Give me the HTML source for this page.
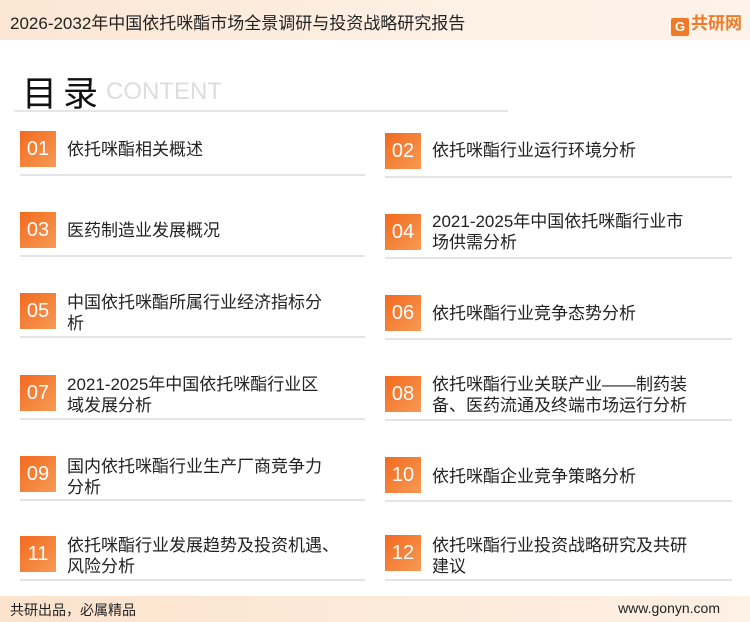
<!DOCTYPE html>
<html><head><meta charset="utf-8"><style>
*{margin:0;padding:0;box-sizing:border-box}
body{width:750px;height:622px;position:relative;background:#fff;font-family:"Liberation Sans","Noto Sans CJK SC",sans-serif;overflow:hidden;color:#222}
.hdr{position:absolute;left:0;top:0;width:750px;height:40px;background:linear-gradient(90deg,#fbe6d3,#fdf0e4 60%,#fdf3ea)}
.hdr .t{position:absolute;left:10px;top:9px;font-size:17px;color:#222}
.logo{position:absolute;right:8px;top:9px;font-size:17px;font-weight:bold;color:#f07a26}
.logo span{display:inline-block;width:18px;height:18px;background:#f07a26;color:#fff;font-size:13px;text-align:center;line-height:18px;border-radius:2px;margin-right:2px;vertical-align:-2px}
.ttl{position:absolute;left:22px;top:66px;font-size:35px;color:#111;letter-spacing:6px}
.en{position:absolute;left:106px;top:78px;font-size:24px;color:#ddd}
.hl{position:absolute;left:14px;top:110px;width:494px;height:2px;background:#e6e6e6}
.box{position:absolute;width:36px;height:36px;background:linear-gradient(135deg,#f26a1e,#f79a55);color:#fff;font-size:20px;text-align:center;line-height:36px}
.tx{position:absolute;font-size:17px;line-height:21px;color:#222}
.ln{position:absolute;height:2px;background:#e3e3e8}
.ftr{position:absolute;left:0;top:596px;width:750px;height:26px;background:linear-gradient(90deg,#fbe3cd,#fdf0e4)}
.ftr .a{position:absolute;left:10px;top:4px;font-size:14px}
.ftr .b{position:absolute;right:30px;top:4px;font-size:14px}
</style></head><body>
<div class="hdr"><div class="t">2026-2032年中国依托咪酯市场全景调研与投资战略研究报告</div><div class="logo"><span>G</span>共研网</div></div>
<div class="ttl">目录</div><div class="en">CONTENT</div><div class="hl"></div>

<div class="box" style="left:20px;top:131px">01</div><div class="tx" style="left:67px;top:139px">依托咪酯相关概述</div><div class="ln" style="left:20px;top:174px;width:345px"></div>
<div class="box" style="left:385px;top:133px">02</div><div class="tx" style="left:432px;top:140px">依托咪酯行业运行环境分析</div><div class="ln" style="left:385px;top:176px;width:347px"></div>

<div class="box" style="left:20px;top:212px">03</div><div class="tx" style="left:67px;top:220px">医药制造业发展概况</div><div class="ln" style="left:20px;top:255px;width:345px"></div>
<div class="box" style="left:385px;top:214px">04</div><div class="tx" style="left:432px;top:211px">2021-2025年中国依托咪酯行业市<br>场供需分析</div><div class="ln" style="left:385px;top:257px;width:347px"></div>

<div class="box" style="left:20px;top:293px">05</div><div class="tx" style="left:67px;top:292px">中国依托咪酯所属行业经济指标分<br>析</div><div class="ln" style="left:20px;top:336px;width:345px"></div>
<div class="box" style="left:385px;top:295px">06</div><div class="tx" style="left:432px;top:303px">依托咪酯行业竞争态势分析</div><div class="ln" style="left:385px;top:338px;width:347px"></div>

<div class="box" style="left:20px;top:375px">07</div><div class="tx" style="left:67px;top:374px">2021-2025年中国依托咪酯行业区<br>域发展分析</div><div class="ln" style="left:20px;top:418px;width:345px"></div>
<div class="box" style="left:385px;top:376px">08</div><div class="tx" style="left:432px;top:374px">依托咪酯行业关联产业——制药装<br>备、医药流通及终端市场运行分析</div><div class="ln" style="left:385px;top:419px;width:347px"></div>

<div class="box" style="left:20px;top:456px">09</div><div class="tx" style="left:67px;top:456px">国内依托咪酯行业生产厂商竞争力<br>分析</div><div class="ln" style="left:20px;top:499px;width:345px"></div>
<div class="box" style="left:385px;top:457px">10</div><div class="tx" style="left:432px;top:466px">依托咪酯企业竞争策略分析</div><div class="ln" style="left:385px;top:500px;width:347px"></div>

<div class="box" style="left:20px;top:536px">11</div><div class="tx" style="left:67px;top:535px">依托咪酯行业发展趋势及投资机遇、<br>风险分析</div><div class="ln" style="left:20px;top:579px;width:345px"></div>
<div class="box" style="left:385px;top:535px">12</div><div class="tx" style="left:432px;top:535px">依托咪酯行业投资战略研究及共研<br>建议</div><div class="ln" style="left:385px;top:579px;width:347px"></div>

<div class="ftr"><div class="a">共研出品，必属精品</div><div class="b">www.gonyn.com</div></div>
</body></html>
